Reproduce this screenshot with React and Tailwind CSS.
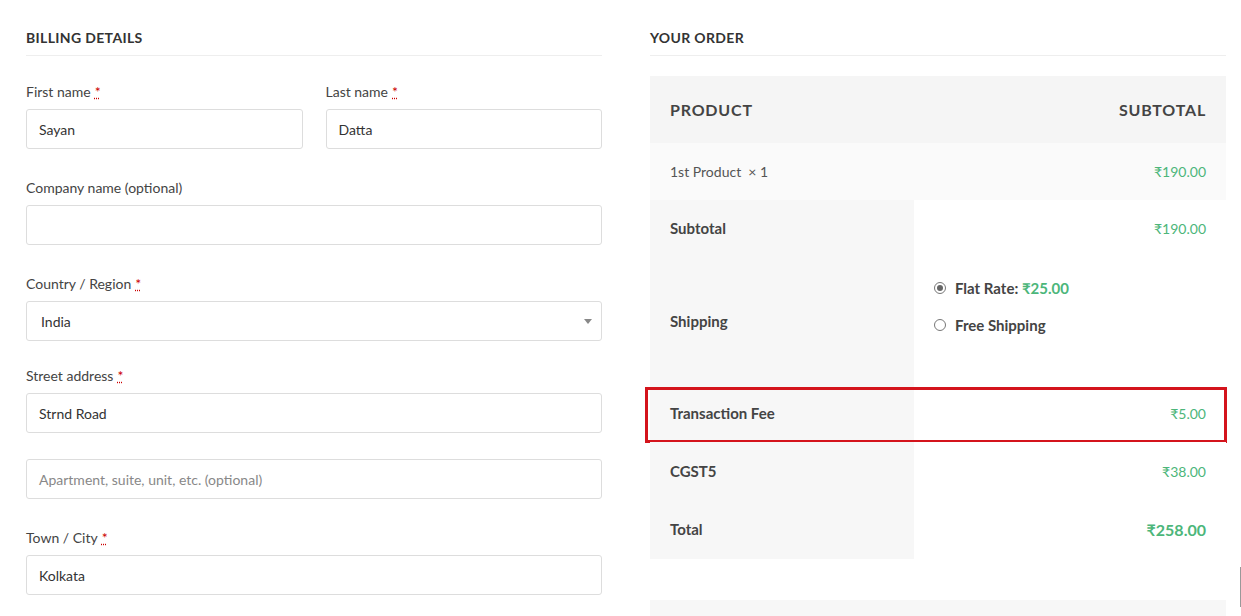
const font = { fontFamily: 'Lato, "Open Sans", sans-serif' };

function Label({ text, required }) {
  return (
    <label className="block text-[14px] leading-5 text-[#444] mb-[7px]">
      {text}
      {required && (
        <span className="ml-1 text-[#c00] underline decoration-dotted decoration-[#c00]">*</span>
      )}
    </label>
  );
}

function Input({ value, placeholder }) {
  return (
    <div className="h-10 w-full border border-[#ddd] rounded-[3px] bg-white px-3 flex items-center text-[14px]">
      {value ? <span className="text-[#333]">{value}</span> : <span className="text-[#888]">{placeholder}</span>}
    </div>
  );
}

function Row({ label, children, h = 'h-[57px]', highlight }) {
  return (
    <div className={`relative flex ${h}`}>
      <div className="w-[264px] bg-[#f7f7f7] flex items-center pl-5 text-[15px] font-bold text-[#444]">
        {label}
      </div>
      <div className="flex-1 bg-white flex items-center justify-end pr-5">{children}</div>
      {highlight && (
        <div className="absolute -left-[5px] -right-[1px] top-[2px] -bottom-[1px] border-[3px] border-[#d4141c]" />
      )}
    </div>
  );
}

export default function App() {
  return (
    <div style={font} className="relative w-[1241px] h-[616px] overflow-hidden bg-white">
      <div className="flex gap-12 pl-[26px] pr-[15px] pt-[28px]">
        {/* Billing */}
        <div className="w-[576px]">
          <h3 className="text-[14px] leading-5 font-bold tracking-wide text-[#333] pb-[7px] border-b border-[#eee]">
            BILLING DETAILS
          </h3>
          <div className="flex gap-[23px] mt-[26px]">
            <div className="flex-1">
              <Label text="First name" required />
              <Input value="Sayan" />
            </div>
            <div className="flex-1">
              <Label text="Last name" required />
              <Input value="Datta" />
            </div>
          </div>
          <div className="mt-[29px]">
            <Label text="Company name (optional)" />
            <Input />
          </div>
          <div className="mt-[29px]">
            <Label text="Country / Region" required />
            <div className="h-10 w-full border border-[#ddd] rounded-[3px] px-[14px] flex items-center justify-between text-[14px] text-[#333]">
              <span>India</span>
              <span className="w-0 h-0 border-l-[4px] border-r-[4px] border-t-[5px] border-l-transparent border-r-transparent border-t-[#888] mr-[-5px]" />
            </div>
          </div>
          <div className="mt-[25px]">
            <Label text="Street address" required />
            <Input value="Strnd Road" />
          </div>
          <div className="mt-[26px]">
            <Input placeholder="Apartment, suite, unit, etc. (optional)" />
          </div>
          <div className="mt-[29px]">
            <Label text="Town / City" required />
            <Input value="Kolkata" />
          </div>
        </div>

        {/* Order */}
        <div className="w-[576px]">
          <h3 className="text-[14px] leading-5 font-bold tracking-wide text-[#333] pb-[7px] border-b border-[#eee]">
            YOUR ORDER
          </h3>
          <div className="mt-5">
            <div className="h-[67px] bg-[#f5f5f5] flex items-center justify-between px-5 text-[16px] font-bold tracking-wider text-[#444]">
              <span>PRODUCT</span>
              <span>SUBTOTAL</span>
            </div>
            <div className="h-[57px] bg-[#fafafa] flex items-center justify-between px-5 text-[14px]">
              <span className="text-[#555]">1st Product&nbsp; × 1</span>
              <span className="text-[#4cb67a]">₹190.00</span>
            </div>
            <Row label="Subtotal">
              <span className="text-[14px] text-[#4cb67a]">₹190.00</span>
            </Row>
            <Row label="Shipping" h="h-[128px]">
              <div className="w-full self-start pt-[20px] pl-5 flex flex-col gap-[14px] text-[15px] font-bold text-[#444]">
                <div className="flex items-center gap-[9px]">
                  <span className="w-[12px] h-[12px] rounded-full border border-[#777] flex items-center justify-center">
                    <span className="w-[6px] h-[6px] rounded-full bg-[#666]" />
                  </span>
                  <span>
                    Flat Rate: <span className="text-[#4cb67a]">₹25.00</span>
                  </span>
                </div>
                <div className="flex items-center gap-[9px]">
                  <span className="w-[12px] h-[12px] rounded-full border border-[#777]" />
                  <span>Free Shipping</span>
                </div>
              </div>
            </Row>
            <Row label="Transaction Fee" highlight>
              <span className="text-[14px] text-[#4cb67a]">₹5.00</span>
            </Row>
            <Row label="CGST5" h="h-[58px]">
              <span className="text-[14px] text-[#4cb67a]">₹38.00</span>
            </Row>
            <Row label="Total" h="h-[59px]">
              <span className="text-[16px] font-bold text-[#4cb67a]">₹258.00</span>
            </Row>
          </div>
          <div className="mt-[41px] h-10 bg-[#f7f7f7]" />
        </div>
      </div>
      <div className="absolute right-0 top-[567px] w-[1px] h-[40px] bg-[#999]" />
    </div>
  );
}
